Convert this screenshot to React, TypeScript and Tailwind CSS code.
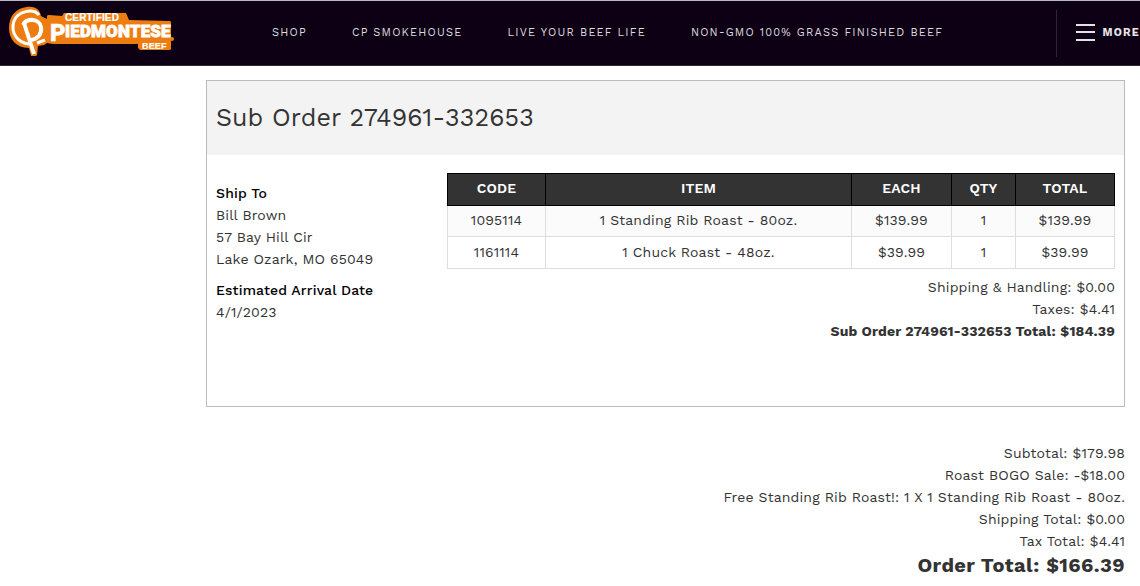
import React from 'react';

const navLinks = ['Shop', 'CP Smokehouse', 'Live Your Beef Life', 'Non-GMO 100% Grass Finished Beef'];

const items = [
  { code: '1095114', item: '1 Standing Rib Roast - 80oz.', each: '$139.99', qty: 1, total: '$139.99' },
  { code: '1161114', item: '1 Chuck Roast - 48oz.', each: '$39.99', qty: 1, total: '$39.99' },
];

const orderTotals = [
  'Subtotal: $179.98',
  'Roast BOGO Sale: -$18.00',
  'Free Standing Rib Roast!: 1 X 1 Standing Rib Roast - 80oz.',
  'Shipping Total: $0.00',
  'Tax Total: $4.41',
];

function Logo() {
  return (
    <svg width="168" height="52" viewBox="0 0 168 52" role="img" aria-label="Certified Piedmontese Beef">
      <g fill="#ee7d11">
        <path d="M20 2C27 1 33 4 34 11L40 14V11Q40 10 42 10L55 11L57 8H119L122 15L163 16Q164 16 164 18V44Q164 45 162 45H133L131 43V39H46L40 38L37 40L31 41L30 50Q30 51 28 51H24L22 43C9 43 2 34 2 23C2 11 9 3 20 2Z" />
        <circle cx="165" cy="34" r="2" />
      </g>
      <g fill="none" stroke="#fff">
        <path d="M32 10C26 3 11 6 7 16C3 28 11 38 22 39" strokeWidth="3" />
        <path d="M30 38L38 35" strokeWidth="3" />
        <path d="M17 18L27 49" strokeWidth="4" />
        <path d="M16 20C20 12 33 14 34 22C35 29 31 34 24 35" strokeWidth="4" />
      </g>
      <g fill="#fff" stroke="#fff">
        <text x="58" y="16" fontSize="10" fontWeight="700" strokeWidth="0.2" fontFamily="'Liberation Sans', sans-serif">CERTIFIED</text>
        <text x="43" y="36" fontSize="24" fontWeight="900" strokeWidth="0.4" fontFamily="Roboto, sans-serif">P</text>
        <text x="58" y="32" fontSize="17" fontWeight="900" strokeWidth="0.8" fontFamily="Roboto, sans-serif">IEDMONTESE</text>
        <text x="135" y="44" fontSize="9" fontWeight="700" strokeWidth="0.2" fontFamily="'Liberation Sans', sans-serif">BEEF</text>
      </g>
    </svg>
  );
}

export default function App() {
  return (
    <div className="bg-white font-['Work_Sans',Inter,sans-serif] text-[14px] leading-[22px] tracking-[0.01em] text-[#333]">
      <header className="flex items-center border-t border-b border-t-[#b9b9bd] border-b-[#30253a] bg-[#0e0014] h-[66px] pl-[7px] overflow-hidden">
        <a href="#" className="shrink-0 mb-1">
          <Logo />
        </a>
        <nav className="flex flex-1 gap-[45px] pl-[97px] text-[11px] uppercase tracking-[0.11em] text-[#ddd9df] whitespace-nowrap">
          {navLinks.map((link) => (
            <a key={link} href="#">{link}</a>
          ))}
        </nav>
        <button className="flex h-[47px] shrink-0 items-center gap-2 border-l border-[#30253a] pl-[19px] text-[11px] font-bold uppercase tracking-[0.11em] text-[#e8e4ea]">
          <svg width="19" height="18" viewBox="0 0 19 18" fill="#e4e0e6" aria-hidden="true">
            <path d="M0 0H19V2H0ZM0 7H19V9H0ZM0 15H19V17H0Z" />
          </svg>
          More
        </button>
      </header>

      <main className="pt-[14px] pr-[15px] pl-[206px]">
        <section className="border border-[#bbb] pb-16">
          <h1 className="bg-[#f3f3f3] px-[9px] py-5 text-[25px] leading-[34px]">Sub Order 274961-332653</h1>
          <div className="flex px-[9px] pt-[18px]">
            <div className="w-[231px] shrink-0 pt-[9px]">
              <h2 className="font-medium text-black">Ship To</h2>
              <p>Bill Brown</p>
              <p>57 Bay Hill Cir</p>
              <p>Lake Ozark, MO 65049</p>
              <h2 className="mt-[9px] font-medium text-black">Estimated Arrival Date</h2>
              <p>4/1/2023</p>
            </div>
            <div className="flex-1">
              <table className="w-full table-fixed border-collapse text-center">
                <thead className="bg-[#333] text-white">
                  <tr className="h-8 *:border *:border-black *:pb-[3px] *:font-semibold">
                    <th className="w-[98px]">CODE</th>
                    <th>ITEM</th>
                    <th className="w-[100px]">EACH</th>
                    <th className="w-[64px]">QTY</th>
                    <th className="w-[99px]">TOTAL</th>
                  </tr>
                </thead>
                <tbody>
                  {items.map((row) => (
                    <tr key={row.code} className="h-[31px] odd:bg-[#fbfbfb] even:h-8 *:border *:border-[#ddd] *:pb-0.5">
                      <td>{row.code}</td>
                      <td>{row.item}</td>
                      <td>{row.each}</td>
                      <td>{row.qty}</td>
                      <td>{row.total}</td>
                    </tr>
                  ))}
                </tbody>
              </table>
              <div className="pt-[7px] text-right">
                <p>Shipping &amp; Handling: $0.00</p>
                <p>Taxes: $4.41</p>
                <p className="font-bold">Sub Order 274961-332653 Total: $184.39</p>
              </div>
            </div>
          </div>
        </section>

        <section className="pt-[35px] text-right">
          {orderTotals.map((line) => (
            <p key={line}>{line}</p>
          ))}
          <p className="text-[20px] leading-[26px] tracking-[0.02em] font-bold">Order Total: $166.39</p>
        </section>
      </main>
    </div>
  );
}
